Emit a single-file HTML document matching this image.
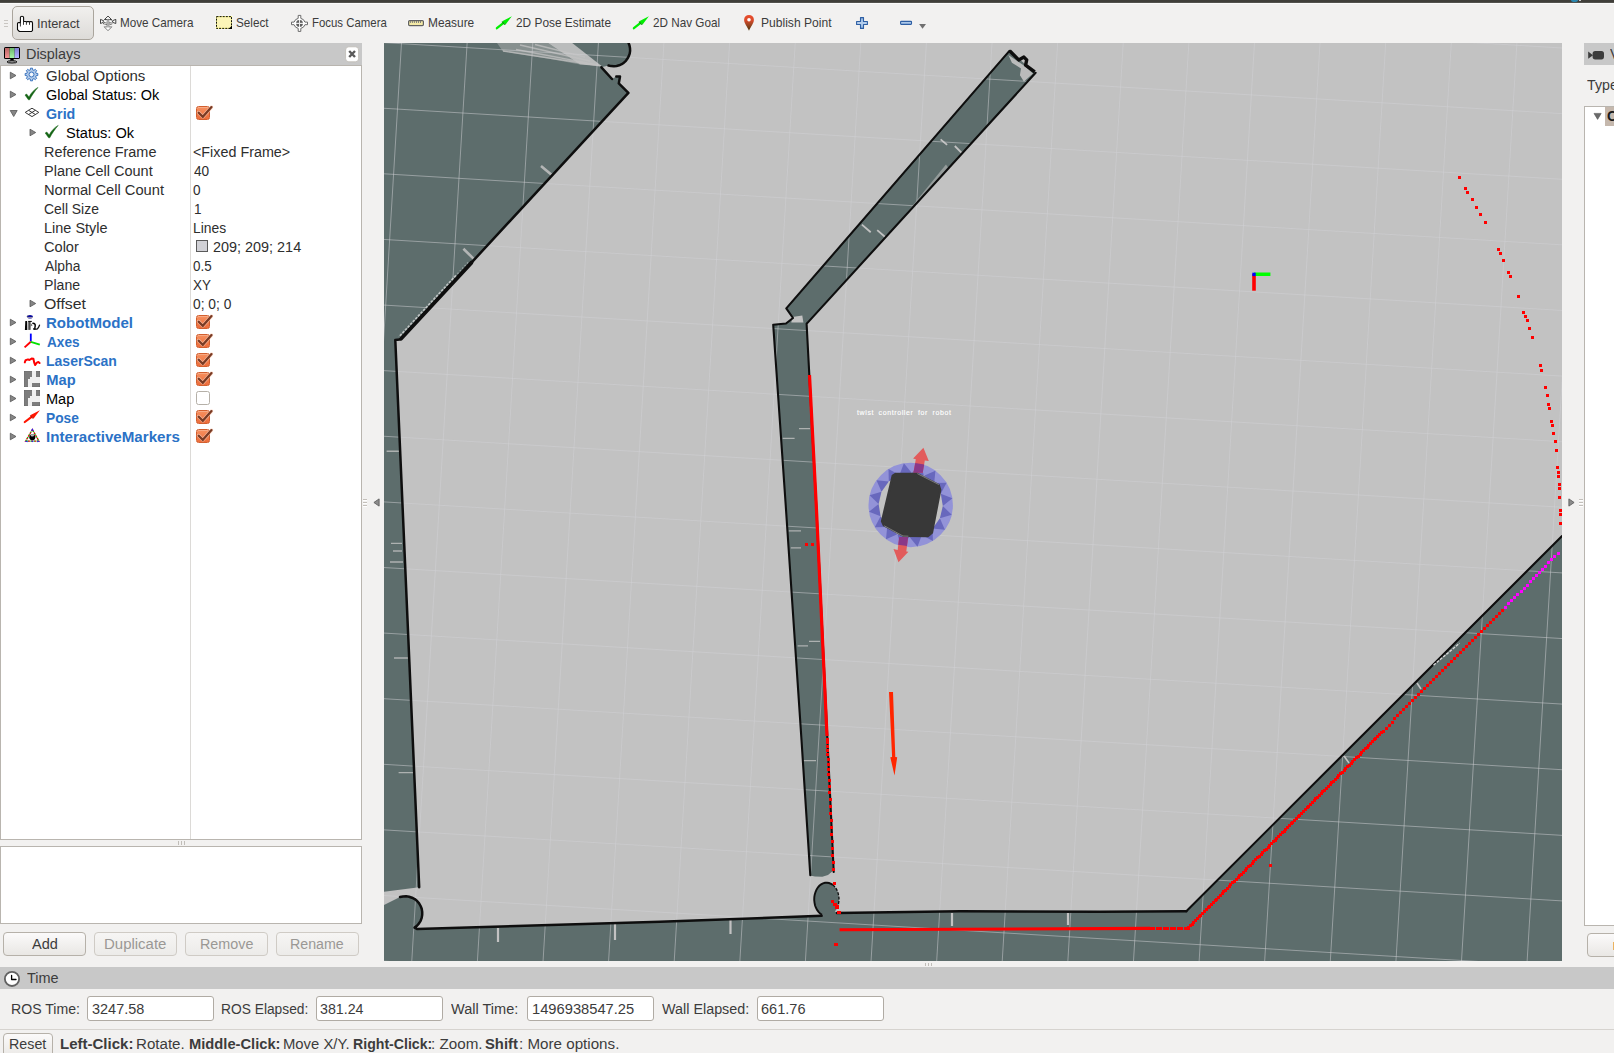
<!DOCTYPE html>
<html><head><meta charset="utf-8"><title>RViz</title>
<style>
html,body{margin:0;padding:0;overflow:hidden;width:1614px;height:1053px}
#root{position:absolute;left:0;top:0;width:1614px;height:1053px;overflow:hidden;background:#f2f1f0}
body{width:1614px;height:1053px;overflow:hidden;position:relative;background:#f2f1f0;font-family:"Liberation Sans",sans-serif}
.a{position:absolute;box-sizing:border-box}
.t{position:absolute;white-space:pre;transform-origin:0 0;display:inline-block}
.hdr{background:#c8c8c8}
.white{background:#fff;border:1px solid #b9b5af}
.btn{border:1px solid #b6b1a9;border-radius:4px;background:linear-gradient(#fbfafa,#e9e7e4)}
.btn.dis{border-color:#cfcbc5;background:linear-gradient(#f6f5f4,#ecebe9)}
.inp{background:#fff;border:1px solid #b0aba4;border-radius:3px}
.cb{position:absolute;left:196px;width:14px;height:14px;box-sizing:border-box;border-radius:2.5px}
.cb.on{background:linear-gradient(#f6905f,#ed6d3b);border:1px solid #d25f2f;box-shadow:inset 0 1px 0 rgba(255,255,255,.25)}
.cb.off{background:#fff;border:1px solid #b5b0a8}
.arr{position:absolute;width:0;height:0}
.arr.r{border-left:6px solid #7d7d7d;border-top:4px solid transparent;border-bottom:4px solid transparent}
.arr.d{border-top:6px solid #4d4d4d;border-left:4px solid transparent;border-right:4px solid transparent}
svg.ic{position:absolute;overflow:visible}

</style></head>
<body><div id="root">
<div class="a" style="left:0;top:0;width:1614px;height:3px;background:linear-gradient(#403f3a 0,#403f3a 70%,#6b6a66 100%)"></div><div class="a" style="left:0;top:3px;width:1614px;height:1px;background:#fbfbfa"></div><div class="a" style="left:1571px;top:-2px;width:7px;height:4px;border-radius:50%;background:#2a86ad"></div><div class="a" style="left:1579px;top:-1px;width:2.4px;height:2.4px;background:#c8c8c8"></div>
<!-- toolbar -->
<div class="a" style="left:4px;top:20px;width:4px;height:1px;background:#c9c6c2;box-shadow:0 3px 0 #c9c6c2,0 6px 0 #c9c6c2"></div>
<div class="a" style="left:12px;top:6px;width:82px;height:34px;border:1px solid #aaa59d;border-radius:5px;background:linear-gradient(#f1f0ee,#dddbd8)"></div>
<!-- displays panel -->
<div class="a hdr" style="left:0;top:43px;width:362px;height:22px"></div>
<div class="a white" style="left:0;top:65px;width:362px;height:775px;border-color:#b9b5af"></div>
<div class="a" style="left:190px;top:66px;width:1px;height:773px;background:#dcdad7"></div>
<div class="a" style="left:178px;top:841px;width:1px;height:4px;background:#c0bdb8;box-shadow:3px 0 0 #c0bdb8,6px 0 0 #c0bdb8"></div>
<div class="a white" style="left:0;top:846px;width:362px;height:78px"></div>
<div class="a btn" style="left:3px;top:931.5px;width:83px;height:24.5px"></div>
<div class="a btn dis" style="left:94px;top:931.5px;width:83px;height:24.5px"></div>
<div class="a btn dis" style="left:185px;top:931.5px;width:83px;height:24.5px"></div>
<div class="a btn dis" style="left:276px;top:931.5px;width:83px;height:24.5px"></div>
<!-- time panel -->
<div class="a hdr" style="left:0;top:967px;width:1614px;height:22px"></div>
<div class="a inp" style="left:87px;top:996px;width:127px;height:25px"></div>
<div class="a inp" style="left:316px;top:996px;width:127px;height:25px"></div>
<div class="a inp" style="left:527px;top:996px;width:127px;height:25px"></div>
<div class="a inp" style="left:757px;top:996px;width:127px;height:25px"></div>
<div class="a" style="left:0;top:1029px;width:1614px;height:1px;background:#d6d3cf"></div>
<div class="a btn" style="left:3px;top:1033px;width:50px;height:26px"></div>
<!-- right panel -->
<div class="a hdr" style="left:1584px;top:43px;width:30px;height:22px"></div>
<div class="a white" style="left:1584px;top:106px;width:40px;height:820px"></div>
<div class="a" style="left:1605px;top:107px;width:20px;height:19px;background:#c5b8ad"></div>
<div class="a btn" style="left:1587px;top:933px;width:40px;height:24px"></div>
<!-- collapse arrows -->
<div class="a" style="left:925px;top:963px;width:1px;height:3px;background:#c0bdb8;box-shadow:3px 0 0 #c0bdb8,6px 0 0 #c0bdb8"></div>
<div class="a" style="left:1612.6px;top:942px;width:2px;height:8px;background:#e9a23b;opacity:.8"></div>
<svg class="ic" style="left:362px;top:490px" width="1260" height="24" viewBox="362 490 1260 24">
<path d="M379.1,498.9 V506.1 L373.9,502.5 Z" fill="#8c8c8c" stroke="#5e5e5e" stroke-width="0.9" stroke-linejoin="round"/>
<path d="M1568.9,498.9 V506.1 L1574.1,502.5 Z" fill="#8c8c8c" stroke="#5e5e5e" stroke-width="0.9" stroke-linejoin="round"/>
<path d="M363,499.5 h4 M363,502.5 h4 M363,505.5 h4 M1579,499.5 h4 M1579,502.5 h4 M1579,505.5 h4" stroke="#c3bfba" stroke-width="1"/>
<path d="M363,500.5 h4 M363,503.5 h4 M363,506.5 h4 M1579,500.5 h4 M1579,503.5 h4 M1579,506.5 h4" stroke="#ffffff" stroke-width="1"/>
</svg>

<svg width="1178" height="918" viewBox="384 43 1178 918" style="position:absolute;left:384px;top:43px;display:block">
<rect x="384" y="43" width="1178" height="918" fill="#5d6d6c"/>
<polygon points="628.6,43.0 629.5,45.5 630.0,48.2 630.1,50.9 629.7,53.6 628.8,56.2 627.5,58.6 625.9,60.8 623.9,62.7 621.7,64.2 619.2,65.3 616.6,66.0 613.9,66.3 611.2,66.1 608.5,65.5 601.4,67.3 612.0,79.0 616.3,76.6 620.0,76.6 618.8,83.4 628.4,92.9 400.5,339.6 395.4,341.0 419.2,887.3 384.0,891.7 384.0,905.0 400.0,897.1 403.0,896.5 406.1,896.3 409.1,896.7 412.0,897.7 414.7,899.1 417.1,901.0 419.1,903.4 420.6,906.0 421.7,908.8 422.2,911.9 422.2,914.9 421.7,917.9 420.6,920.8 419.0,923.4 417.0,925.7 414.6,927.6 417.0,929.0 660.0,921.8 821.7,915.7 823.4,915.3 820.9,914.0 818.6,912.0 816.7,909.3 815.3,906.2 814.5,902.7 814.2,899.1 814.5,895.5 815.5,892.0 816.9,888.9 818.8,886.4 821.1,884.4 823.7,883.2 826.4,882.7 829.1,883.0 831.7,884.2 834.1,886.0 836.0,888.5 837.6,891.6 838.6,895.0 839.0,898.6 838.8,902.2 838.0,905.7 836.7,908.9 834.9,911.6 837.5,912.7 960.0,911.3 1100.0,911.8 1186.3,911.2 1562.0,536.0 1562.0,43.0" fill="#c2c2c2"/>
<polygon points="601.9,66.3 572.2,43 548,43 580,64.4" fill="#c2c2c2" opacity="0.93"/>
<polygon points="580,64.4 548,43 497,43 503,51.5 549,58.8" fill="#c2c2c2" opacity="0.42"/>
<path d="M601,66 L503,51 M596,64.6 L516,49.5 M590,61 L520,45 M585,57 L535,44.5" stroke="#c2c2c2" stroke-width="1.3" fill="none" opacity="0.75"/>
<polygon points="773.2,324.8 786.0,323.5 793.0,318.0 786.3,308.4 1009.4,50.9 1035.6,72.8 807.7,322.6 806.6,323.7 816.5,510.0 827.0,730.0 832.8,871.0 828.0,875.0 822.3,876.8 815.0,876.6 810.0,875.6 801.5,740.0 785.7,505.0" fill="#5d6d6c"/>
<polygon points="792.4,317.1 802.3,315.4 803.4,322.4 791.3,322.6" fill="#c2c2c2"/>
<polygon points="898,223.5 946,164.5 948.2,167.8 902.3,225.7" fill="#c2c2c2" opacity="0.55"/>
<path d="M940.6,139.4 L947.1,144.9 M954.8,146 L962.4,153.6 M861.9,224.6 L870.7,232.3 M877.2,230.1 L886,237.7" stroke="#c2c2c2" stroke-width="1.8" fill="none"/>
<polygon points="1008.4,55 1016.5,60.5 1025,66.2 1033,73.6 1023.9,81.6 1019.9,75.3 1021,68.5 1011.9,62.8" fill="#c2c2c2" opacity="0.92"/>
<path d="M498,928 V942 M615,924 V940 M730.5,920 V934 M952,913 V926 M1068,913 V925" stroke="#c2c2c2" stroke-width="2.2" fill="none"/>
<path d="M391,543.4 H402 M393,551 H402 M390,562 H403 M394,658 H408 M398.6,772.6 H414 M386.6,451.2 H399.7" stroke="#c2c2c2" stroke-width="1.4" fill="none" opacity="0.8"/>
<path d="M799,428.6 H810 M782.6,438.4 H794.6 M788.5,530.8 H801 M790.8,547.9 H801 M809,641.3 H820 M797.6,645.9 H808 M803,760.6 H816" stroke="#c2c2c2" stroke-width="1.3" fill="none" opacity="0.8"/>
<path d="M463.4,248.8 L473.5,258.6 M541,166 L551.5,174.8" stroke="#c2c2c2" stroke-width="2.6" fill="none" opacity="0.85"/>
<!--GRID-->
<g stroke="rgb(209,209,214)" stroke-opacity="0.5" stroke-width="1"><line x1="294.4" y1="-356.4" x2="207.7" y2="1081.7"/><line x1="359.8" y1="-352.5" x2="273.1" y2="1085.7"/><line x1="425.1" y1="-348.6" x2="338.4" y2="1089.6"/><line x1="490.5" y1="-344.6" x2="403.8" y2="1093.6"/><line x1="555.9" y1="-340.7" x2="469.2" y2="1097.5"/><line x1="621.3" y1="-336.7" x2="534.6" y2="1101.4"/><line x1="686.6" y1="-332.8" x2="599.9" y2="1105.4"/><line x1="752.0" y1="-328.8" x2="665.3" y2="1109.3"/><line x1="817.4" y1="-324.9" x2="730.7" y2="1113.3"/><line x1="882.7" y1="-321.0" x2="796.0" y2="1117.2"/><line x1="948.1" y1="-317.0" x2="861.4" y2="1121.1"/><line x1="1013.5" y1="-313.1" x2="926.8" y2="1125.1"/><line x1="1078.9" y1="-309.1" x2="992.1" y2="1129.0"/><line x1="1144.2" y1="-305.2" x2="1057.5" y2="1133.0"/><line x1="1209.6" y1="-301.3" x2="1122.9" y2="1136.9"/><line x1="1275.0" y1="-297.3" x2="1188.3" y2="1140.8"/><line x1="1340.3" y1="-293.4" x2="1253.6" y2="1144.8"/><line x1="1405.7" y1="-289.4" x2="1319.0" y2="1148.7"/><line x1="1471.1" y1="-285.5" x2="1384.4" y2="1152.7"/><line x1="1536.5" y1="-281.6" x2="1449.7" y2="1156.6"/><line x1="1601.8" y1="-277.6" x2="1515.1" y2="1160.6"/><line x1="1667.2" y1="-273.7" x2="1580.5" y2="1164.5"/><line x1="1732.6" y1="-269.7" x2="1645.9" y2="1168.4"/><line x1="278.6" y1="-95.0" x2="1716.8" y2="-8.2"/><line x1="274.7" y1="-29.6" x2="1712.9" y2="57.1"/><line x1="270.8" y1="35.8" x2="1708.9" y2="122.5"/><line x1="266.8" y1="101.2" x2="1705.0" y2="187.9"/><line x1="262.9" y1="166.5" x2="1701.0" y2="253.2"/><line x1="258.9" y1="231.9" x2="1697.1" y2="318.6"/><line x1="255.0" y1="297.3" x2="1693.2" y2="384.0"/><line x1="251.0" y1="362.6" x2="1689.2" y2="449.4"/><line x1="247.1" y1="428.0" x2="1685.3" y2="514.7"/><line x1="243.2" y1="493.4" x2="1681.3" y2="580.1"/><line x1="239.2" y1="558.8" x2="1677.4" y2="645.5"/><line x1="235.3" y1="624.1" x2="1673.4" y2="710.8"/><line x1="231.3" y1="689.5" x2="1669.5" y2="776.2"/><line x1="227.4" y1="754.9" x2="1665.6" y2="841.6"/><line x1="223.5" y1="820.2" x2="1661.6" y2="906.9"/><line x1="219.5" y1="885.6" x2="1657.7" y2="972.3"/><line x1="215.6" y1="951.0" x2="1653.7" y2="1037.7"/><line x1="211.6" y1="1016.4" x2="1649.8" y2="1103.1"/></g>
<polyline points="628.6,43.0 629.5,45.5 630.0,48.2 630.1,50.9 629.7,53.6 628.8,56.2 627.5,58.6 625.9,60.8 623.9,62.7 621.7,64.2 619.2,65.3 616.6,66.0 613.9,66.3 611.2,66.1 608.5,65.5" fill="none" stroke="#0e0e0e" stroke-width="2.5" stroke-linejoin="round" stroke-linecap="round"/>
<polyline points="601.4,67.3 612,79" fill="none" stroke="#0e0e0e" stroke-width="2.5" stroke-linejoin="round" stroke-linecap="round"/>
<polyline points="616.3,76.6 620,76.6 618.8,83.4 628.4,92.9 471.5,262.6" fill="none" stroke="#0e0e0e" stroke-width="2.5" stroke-linejoin="round" stroke-linecap="round"/>
<polyline points="471.5,262.6 401,338.8" fill="none" stroke="#0e0e0e" stroke-width="3.8" stroke-linecap="round"/>
<polyline points="455.9,275.4 398.9,336.9" fill="none" stroke="#d0d2d2" stroke-width="1.7" stroke-dasharray="2.6 1.2" stroke-opacity="0.85"/>
<polyline points="468,262.4 455.9,275.4" fill="none" stroke="#c8cccc" stroke-width="1.2" stroke-dasharray="1.5 2" stroke-opacity="0.6"/>
<polyline points="399.5,339.5 395.3,340 419.2,887.3" fill="none" stroke="#0e0e0e" stroke-width="2.5" stroke-linejoin="round" stroke-linecap="round"/>
<polyline points="400.0,897.1 403.0,896.5 406.1,896.3 409.1,896.7 412.0,897.7 414.7,899.1 417.1,901.0 419.1,903.4 420.6,906.0 421.7,908.8 422.2,911.9 422.2,914.9 421.7,917.9 420.6,920.8 419.0,923.4 417.0,925.7 414.6,927.6 417,929 660,921.8 821.7,915.7" fill="none" stroke="#0e0e0e" stroke-width="2.5" stroke-linejoin="round" stroke-linecap="round"/>
<polyline points="822.0,914.7 820.1,913.5 818.5,911.9 817.1,909.9 815.9,907.7 815.0,905.2 814.5,902.6 814.2,899.9 814.3,897.2 814.7,894.6 815.5,892.0 816.5,889.7 817.8,887.6 819.3,885.8 821.1,884.4 823.0,883.4 825.0,882.8 827.0,882.7 829.0,883.0 831.0,883.8 832.8,884.9" fill="none" stroke="#0e0e0e" stroke-width="1.9"/>
<polyline points="832.8,884.9 834.5,886.5 836.0,888.4 837.2,890.6 838.1,893.1 838.7,895.7 839.0,898.4 838.9,901.2 838.5,903.9 837.8,906.4 836.8,908.8" fill="none" stroke="#0e0e0e" stroke-width="1.3" stroke-dasharray="3 1.5"/>
<polyline points="837,913 960,911.3 1100,911.8 1186.3,911.2" fill="none" stroke="#0e0e0e" stroke-width="2.5" stroke-linejoin="round" stroke-linecap="round"/>
<polyline points="1186.3,911.2 1562,536" fill="none" stroke="#0e0e0e" stroke-width="2.1" stroke-linecap="round"/>
<polyline points="1433.5,665.2 1459.5,643.2" fill="none" stroke="#d8d8d8" stroke-width="1.4" stroke-dasharray="3 1.2"/>
<path d="M1344,756 l5,7 M1417,683 l4,6" fill="none" stroke="#c2c2c2" stroke-width="1.6"/>
<polyline points="810.3,875.3 801.5,740 785.7,505 773.2,324.8 786,323.5 793,318 786.3,308.4 1009.4,50.9" fill="none" stroke="#0e0e0e" stroke-width="2.1" stroke-linejoin="round" stroke-linecap="round"/>
<polyline points="1035.6,72.8 807.7,322.6 806.6,323.7 816.5,510 827,730 833.7,872" fill="none" stroke="#0e0e0e" stroke-width="2.1" stroke-linejoin="round" stroke-linecap="round"/>
<polyline points="1009.6,50.8 1018.7,59.9 1023.9,57.1 1026.7,59.9 1025.6,65.1 1034.7,71.9" fill="none" stroke="#0e0e0e" stroke-width="3.4" stroke-linejoin="round"/>
<g fill="#ff0000" shape-rendering="crispEdges">
<polyline points="809.5,375 816.5,510 827,736" fill="none" stroke="#ff0000" stroke-width="3.2" shape-rendering="auto"/>
<rect x="825.6" y="737.5" width="3" height="3"/><rect x="825.8" y="741.1" width="3" height="3"/><rect x="826.0" y="744.9" width="3" height="3"/><rect x="826.2" y="749.0" width="3" height="3"/><rect x="826.4" y="753.2" width="3" height="3"/><rect x="826.6" y="757.8" width="3" height="3"/><rect x="826.9" y="762.6" width="3" height="3"/><rect x="827.1" y="767.7" width="3" height="3"/><rect x="827.4" y="773.1" width="3" height="3"/><rect x="827.7" y="778.9" width="3" height="3"/><rect x="827.9" y="785.0" width="3" height="3"/><rect x="828.3" y="791.4" width="3" height="3"/><rect x="828.6" y="798.2" width="3" height="3"/><rect x="828.9" y="805.2" width="3" height="3"/><rect x="829.3" y="812.2" width="3" height="3"/><rect x="829.6" y="819.2" width="3" height="3"/><rect x="830.0" y="826.2" width="3" height="3"/><rect x="830.3" y="833.2" width="3" height="3"/><rect x="830.6" y="840.2" width="3" height="3"/><rect x="831.0" y="847.2" width="3" height="3"/><rect x="831.3" y="854.2" width="3" height="3"/><rect x="831.7" y="861.2" width="3" height="3"/><rect x="832.0" y="868.2" width="3" height="3"/>
<rect x="805.2" y="542.5" width="3" height="3"/><rect x="810.9" y="542.5" width="3" height="3"/>
<rect x="832.6" y="882.1" width="3.2" height="3.2"/><rect x="831.1" y="900.2" width="3.2" height="3.2"/><rect x="833.4" y="902.9" width="3.2" height="3.2"/><rect x="835.4" y="905.4" width="3.2" height="3.2"/><rect x="837.3" y="910.6" width="3.2" height="3.2"/><rect x="834.4" y="942.9" width="3.2" height="3.2"/><rect x="1268.8" y="864.1" width="3.2" height="3.2"/>
<polyline points="839.6,929.8 1150,928.4" fill="none" stroke="#ff0000" stroke-width="3.1" shape-rendering="auto"/>
<rect x="1148.5" y="926.9" width="3" height="3"/><rect x="1152.0" y="926.9" width="3" height="3"/><rect x="1155.5" y="926.8" width="3" height="3"/><rect x="1159.0" y="926.8" width="3" height="3"/><rect x="1162.5" y="926.8" width="3" height="3"/><rect x="1166.0" y="926.7" width="3" height="3"/><rect x="1169.5" y="926.7" width="3" height="3"/><rect x="1173.0" y="926.6" width="3" height="3"/><rect x="1176.5" y="926.6" width="3" height="3"/><rect x="1180.0" y="926.6" width="3" height="3"/><rect x="1183.5" y="926.5" width="3" height="3"/><rect x="1187.0" y="926.5" width="3" height="3"/>
<rect x="1187.0" y="926.1" width="3" height="3"/><rect x="1188.8" y="924.3" width="3" height="3"/><rect x="1190.5" y="922.5" width="3" height="3"/><rect x="1192.3" y="920.7" width="3" height="3"/><rect x="1194.1" y="919.0" width="3" height="3"/><rect x="1195.8" y="917.2" width="3" height="3"/><rect x="1197.6" y="915.4" width="3" height="3"/><rect x="1199.4" y="913.6" width="3" height="3"/><rect x="1201.1" y="911.8" width="3" height="3"/><rect x="1202.9" y="910.0" width="3" height="3"/><rect x="1204.7" y="908.2" width="3" height="3"/><rect x="1206.5" y="906.4" width="3" height="3"/><rect x="1208.2" y="904.7" width="3" height="3"/><rect x="1210.0" y="902.9" width="3" height="3"/><rect x="1211.8" y="901.1" width="3" height="3"/><rect x="1213.5" y="899.3" width="3" height="3"/><rect x="1215.3" y="897.5" width="3" height="3"/><rect x="1217.1" y="895.7" width="3" height="3"/><rect x="1218.8" y="893.9" width="3" height="3"/><rect x="1220.6" y="892.1" width="3" height="3"/><rect x="1222.4" y="890.4" width="3" height="3"/><rect x="1224.1" y="888.6" width="3" height="3"/><rect x="1225.9" y="886.8" width="3" height="3"/><rect x="1227.7" y="885.0" width="3" height="3"/><rect x="1229.4" y="883.2" width="3" height="3"/><rect x="1231.2" y="881.4" width="3" height="3"/><rect x="1233.0" y="879.6" width="3" height="3"/><rect x="1234.7" y="877.8" width="3" height="3"/><rect x="1236.5" y="876.1" width="3" height="3"/><rect x="1238.3" y="874.3" width="3" height="3"/><rect x="1240.0" y="872.5" width="3" height="3"/><rect x="1241.8" y="870.7" width="3" height="3"/><rect x="1243.6" y="868.9" width="3" height="3"/><rect x="1245.3" y="867.1" width="3" height="3"/><rect x="1247.1" y="865.3" width="3" height="3"/><rect x="1248.9" y="863.5" width="3" height="3"/><rect x="1250.7" y="861.8" width="3" height="3"/><rect x="1252.4" y="860.0" width="3" height="3"/><rect x="1254.2" y="858.2" width="3" height="3"/><rect x="1256.0" y="856.4" width="3" height="3"/><rect x="1257.7" y="854.6" width="3" height="3"/><rect x="1259.5" y="852.8" width="3" height="3"/><rect x="1261.3" y="851.0" width="3" height="3"/><rect x="1263.0" y="849.2" width="3" height="3"/><rect x="1264.8" y="847.5" width="3" height="3"/><rect x="1266.6" y="845.7" width="3" height="3"/><rect x="1268.3" y="843.9" width="3" height="3"/><rect x="1270.1" y="842.1" width="3" height="3"/><rect x="1271.9" y="840.3" width="3" height="3"/><rect x="1273.6" y="838.5" width="3" height="3"/><rect x="1275.4" y="836.7" width="3" height="3"/><rect x="1277.2" y="834.9" width="3" height="3"/><rect x="1278.9" y="833.2" width="3" height="3"/><rect x="1280.7" y="831.4" width="3" height="3"/><rect x="1282.5" y="829.6" width="3" height="3"/><rect x="1284.2" y="827.8" width="3" height="3"/><rect x="1286.0" y="826.0" width="3" height="3"/><rect x="1287.8" y="824.2" width="3" height="3"/><rect x="1289.6" y="822.4" width="3" height="3"/><rect x="1291.3" y="820.7" width="3" height="3"/><rect x="1293.1" y="818.9" width="3" height="3"/><rect x="1294.9" y="817.1" width="3" height="3"/><rect x="1296.6" y="815.3" width="3" height="3"/><rect x="1298.4" y="813.5" width="3" height="3"/><rect x="1300.2" y="811.7" width="3" height="3"/><rect x="1301.9" y="809.9" width="3" height="3"/><rect x="1303.7" y="808.1" width="3" height="3"/><rect x="1305.5" y="806.4" width="3" height="3"/><rect x="1307.2" y="804.6" width="3" height="3"/><rect x="1309.0" y="802.8" width="3" height="3"/><rect x="1310.8" y="801.0" width="3" height="3"/><rect x="1312.5" y="799.2" width="3" height="3"/><rect x="1314.3" y="797.4" width="3" height="3"/><rect x="1316.1" y="795.6" width="3" height="3"/><rect x="1317.8" y="793.8" width="3" height="3"/><rect x="1319.6" y="792.1" width="3" height="3"/><rect x="1321.4" y="790.3" width="3" height="3"/><rect x="1323.2" y="788.5" width="3" height="3"/><rect x="1324.9" y="786.7" width="3" height="3"/><rect x="1326.7" y="784.9" width="3" height="3"/><rect x="1328.5" y="783.1" width="3" height="3"/><rect x="1330.2" y="781.3" width="3" height="3"/><rect x="1332.0" y="779.5" width="3" height="3"/><rect x="1333.8" y="777.8" width="3" height="3"/><rect x="1335.5" y="776.0" width="3" height="3"/><rect x="1337.3" y="774.2" width="3" height="3"/><rect x="1339.1" y="772.4" width="3" height="3"/><rect x="1340.8" y="770.6" width="3" height="3"/><rect x="1342.6" y="768.8" width="3" height="3"/><rect x="1344.4" y="767.0" width="3" height="3"/><rect x="1346.1" y="765.2" width="3" height="3"/><rect x="1347.9" y="763.5" width="3" height="3"/><rect x="1349.7" y="761.7" width="3" height="3"/><rect x="1351.4" y="759.9" width="3" height="3"/><rect x="1353.2" y="758.1" width="3" height="3"/><rect x="1355.0" y="756.3" width="3" height="3"/><rect x="1356.7" y="754.5" width="3" height="3"/><rect x="1358.5" y="752.7" width="3" height="3"/><rect x="1360.3" y="750.9" width="3" height="3"/><rect x="1362.0" y="749.2" width="3" height="3"/><rect x="1363.8" y="747.4" width="3" height="3"/><rect x="1365.6" y="745.6" width="3" height="3"/><rect x="1367.4" y="743.8" width="3" height="3"/><rect x="1369.1" y="742.0" width="3" height="3"/><rect x="1370.9" y="740.2" width="3" height="3"/><rect x="1372.7" y="738.4" width="3" height="3"/><rect x="1374.4" y="736.6" width="3" height="3"/><rect x="1376.2" y="734.9" width="3" height="3"/><rect x="1378.0" y="733.1" width="3" height="3"/><rect x="1379.7" y="731.3" width="3" height="3"/><rect x="1381.5" y="729.5" width="3" height="3"/>
<rect x="1384.5" y="726.5" width="3" height="3"/><rect x="1387.5" y="723.5" width="3" height="3"/><rect x="1390.5" y="720.5" width="3" height="3"/><rect x="1393.4" y="717.4" width="3" height="3"/><rect x="1396.4" y="714.4" width="3" height="3"/><rect x="1399.4" y="711.4" width="3" height="3"/><rect x="1402.4" y="708.4" width="3" height="3"/><rect x="1405.4" y="705.4" width="3" height="3"/><rect x="1408.4" y="702.4" width="3" height="3"/><rect x="1411.3" y="699.3" width="3" height="3"/><rect x="1414.3" y="696.3" width="3" height="3"/><rect x="1417.3" y="693.3" width="3" height="3"/><rect x="1420.3" y="690.3" width="3" height="3"/><rect x="1423.3" y="687.3" width="3" height="3"/><rect x="1426.2" y="684.2" width="3" height="3"/><rect x="1429.2" y="681.2" width="3" height="3"/><rect x="1432.2" y="678.2" width="3" height="3"/><rect x="1435.2" y="675.2" width="3" height="3"/><rect x="1438.2" y="672.2" width="3" height="3"/><rect x="1441.2" y="669.2" width="3" height="3"/><rect x="1444.1" y="666.1" width="3" height="3"/><rect x="1447.1" y="663.1" width="3" height="3"/><rect x="1450.1" y="660.1" width="3" height="3"/><rect x="1453.1" y="657.1" width="3" height="3"/><rect x="1456.1" y="654.1" width="3" height="3"/><rect x="1459.1" y="651.1" width="3" height="3"/><rect x="1462.0" y="648.0" width="3" height="3"/><rect x="1465.0" y="645.0" width="3" height="3"/><rect x="1468.0" y="642.0" width="3" height="3"/><rect x="1471.0" y="639.0" width="3" height="3"/><rect x="1474.0" y="636.0" width="3" height="3"/><rect x="1476.9" y="632.9" width="3" height="3"/><rect x="1479.9" y="629.9" width="3" height="3"/><rect x="1482.9" y="626.9" width="3" height="3"/><rect x="1485.9" y="623.9" width="3" height="3"/><rect x="1488.9" y="620.9" width="3" height="3"/><rect x="1491.9" y="617.9" width="3" height="3"/><rect x="1494.8" y="614.8" width="3" height="3"/><rect x="1497.8" y="611.8" width="3" height="3"/><rect x="1500.8" y="608.8" width="3" height="3"/>
<rect x="1457.5" y="176.3" width="3" height="3"/><rect x="1464.2" y="187.0" width="3" height="3"/><rect x="1466.4" y="190.7" width="3" height="3"/><rect x="1470.9" y="198.1" width="3" height="3"/><rect x="1474.9" y="205.9" width="3" height="3"/><rect x="1479.0" y="213.3" width="3" height="3"/><rect x="1483.5" y="221.1" width="3" height="3"/><rect x="1496.8" y="247.8" width="3" height="3"/><rect x="1498.6" y="251.5" width="3" height="3"/><rect x="1502.0" y="259.2" width="3" height="3"/><rect x="1506.8" y="271.1" width="3" height="3"/><rect x="1509.0" y="275.2" width="3" height="3"/><rect x="1516.8" y="295.2" width="3" height="3"/><rect x="1522.4" y="311.1" width="3" height="3"/><rect x="1524.2" y="315.2" width="3" height="3"/><rect x="1525.7" y="319.2" width="3" height="3"/><rect x="1528.3" y="327.4" width="3" height="3"/><rect x="1530.5" y="335.5" width="3" height="3"/><rect x="1538.6" y="364.4" width="3" height="3"/><rect x="1539.8" y="368.9" width="3" height="3"/><rect x="1543.8" y="385.5" width="3" height="3"/><rect x="1545.7" y="394.1" width="3" height="3"/><rect x="1547.2" y="402.5" width="3" height="3"/><rect x="1547.9" y="406.6" width="3" height="3"/><rect x="1550.1" y="419.6" width="3" height="3"/><rect x="1550.9" y="423.7" width="3" height="3"/><rect x="1552.4" y="432.2" width="3" height="3"/><rect x="1553.5" y="440.4" width="3" height="3"/><rect x="1554.6" y="448.9" width="3" height="3"/><rect x="1556.1" y="466.3" width="3" height="3"/><rect x="1556.8" y="470.7" width="3" height="3"/><rect x="1557.2" y="474.8" width="3" height="3"/><rect x="1557.9" y="483.3" width="3" height="3"/><rect x="1557.9" y="487.4" width="3" height="3"/><rect x="1558.3" y="495.9" width="3" height="3"/><rect x="1559.0" y="508.5" width="3" height="3"/><rect x="1559.0" y="512.9" width="3" height="3"/><rect x="1559.0" y="521.5" width="3" height="3"/>
</g>
<g fill="#ff00ff" shape-rendering="crispEdges"><rect x="1504.1" y="605.5" width="3" height="3"/><rect x="1507.2" y="602.4" width="3" height="3"/><rect x="1510.3" y="599.2" width="3" height="3"/><rect x="1513.3" y="596.1" width="3" height="3"/><rect x="1516.4" y="592.9" width="3" height="3"/><rect x="1519.5" y="589.8" width="3" height="3"/><rect x="1522.6" y="586.6" width="3" height="3"/><rect x="1525.7" y="583.5" width="3" height="3"/><rect x="1528.8" y="580.3" width="3" height="3"/><rect x="1531.8" y="577.2" width="3" height="3"/><rect x="1534.9" y="574.0" width="3" height="3"/><rect x="1538.0" y="570.9" width="3" height="3"/><rect x="1541.1" y="567.7" width="3" height="3"/><rect x="1544.2" y="564.6" width="3" height="3"/><rect x="1547.3" y="561.4" width="3" height="3"/><rect x="1550.3" y="558.3" width="3" height="3"/><rect x="1553.4" y="555.1" width="3" height="3"/><rect x="1556.5" y="552.0" width="3" height="3"/></g>
<polygon points="889,692 893,692 895.3,757 897.2,757.2 894.5,775.5 890.3,757.2 892.1,757" fill="#ff2600"/>
<rect x="1252.2" y="274" width="3.6" height="16.7" fill="#ff0000"/><rect x="1254" y="272.5" width="16.4" height="3.5" fill="#00ff00"/><rect x="1252.3" y="272.7" width="3.4" height="3.4" fill="#0000ff"/>
<text x="857" y="415" font-family="Liberation Sans, sans-serif" font-size="7" fill="#ffffff" stroke="#ffffff" stroke-width="0.12" textLength="94" lengthAdjust="spacing" word-spacing="2">twist controller for robot</text>
<g>
<circle cx="910.7" cy="505.0" r="37.3" fill="none" stroke="#9393d8" stroke-width="9.800000000000004"/>
<g fill="#6868bd"><polygon points="942.8,506.1 939.9,518.3 951.8,514.7"/><polygon points="939.9,518.3 932.6,528.5 944.9,529.7"/><polygon points="932.6,528.5 921.9,535.1 932.9,540.9"/><polygon points="921.9,535.1 909.6,537.1 917.5,546.7"/><polygon points="909.6,537.1 897.4,534.2 901.0,546.1"/><polygon points="897.4,534.2 887.2,526.9 886.0,539.2"/><polygon points="887.2,526.9 880.6,516.2 874.8,527.2"/><polygon points="880.6,516.2 878.6,503.9 869.0,511.8"/><polygon points="878.6,503.9 881.5,491.7 869.6,495.3"/><polygon points="881.5,491.7 888.8,481.5 876.5,480.3"/><polygon points="888.8,481.5 899.5,474.9 888.5,469.1"/><polygon points="899.5,474.9 911.8,472.9 903.9,463.3"/><polygon points="911.8,472.9 924.0,475.8 920.4,463.9"/><polygon points="924.0,475.8 934.2,483.1 935.4,470.8"/><polygon points="934.2,483.1 940.8,493.8 946.6,482.8"/><polygon points="940.8,493.8 942.8,506.1 952.4,498.2"/></g>
<polygon points="923.4,447.8 928.8,461.1 924.8,460.5 922.7,472.8 913.4,472.8 915.8,459.2 913.1,458.5" fill="#e25b5b"/>
<polygon points="898.5,562.3 893.5,549.0 897.7,550.0 899.2,536.9 908.1,536.9 906.3,551.4 908.4,551.8" fill="#e25b5b"/>
<polygon points="915.3,463.1 924.2,464.6 922.7,472.8 913.4,472.8" fill="#8a3888"/>
<polygon points="899.2,536.9 908.1,536.9 907.0,546.1 898.2,544.7" fill="#8a3888"/>
<polygon points="892.8,475.9 895.9,473.9 917.0,473.9 938.6,485.0 940.1,489.9 931.9,532.6 928.1,535.9 903.4,535.7 883.9,525.2 882.1,521.2" fill="#383838" stroke="#383838" stroke-width="2.5" stroke-linejoin="round"/>
<polyline points="917.3,473.6 938.9,484.6" stroke="#a8a8a8" stroke-width="0.6" fill="none"/>
<polyline points="884.2,525.8 903.0,536.0 908.4,536.2" stroke="#a8a8a8" stroke-width="0.6" fill="none"/>
</g>
</svg>
<div id="rightcover"></div>
<svg class="ic" style="left:0;top:0" width="1000" height="43" viewBox="0 0 1000 43">
<path d="M20.4,22.6 V17.6 Q20.4,16.3 22,16.3 Q23.6,16.3 23.6,17.6 V21.5 H25.6 Q26.4,21.5 26.4,22 Q26.4,21.6 27.4,21.6 H28.6 Q29.5,21.6 29.5,22 Q29.5,21.6 30.4,21.6 H31.4 Q32.5,21.7 32.5,23 V30.4 L31.6,31.5 H19.4 L17.5,29.6 V23.6 Q17.5,22.5 18.6,22.5 Z" fill="#fff" stroke="#0a0a0a" stroke-width="1.1" stroke-linejoin="round"/>
<path d="M20.4,22.4 V26.5 M23.5,21.4 V24.8 M26.4,21.8 V24.8 M29.5,21.8 V24.8" stroke="#222" stroke-width="0.9" fill="none"/>
<g fill="#fff" stroke="#2e2e2e" stroke-width="0.9" stroke-linejoin="round"><path d="M108,16.1 L111.6,19.6 H104.4 Z"/><path d="M100.5,19.4 L103.4,20.7 L103.4,22.3 L100.5,23.5 Z"/><path d="M115.8,19.4 L112.6,20.7 L112.6,22.3 L115.8,23.5 Z"/><ellipse cx="108" cy="21.2" rx="4.6" ry="1.8" stroke-dasharray="1.6 0.9"/><path d="M103,23.4 Q108,26 113,23.4" fill="none" stroke-dasharray="1.6 0.9"/></g>
<path d="M107.1,19.8 h1.8 v7 h3.1 L108,30.8 L104,26.8 h3.1 z" fill="#cfcfcf" stroke="#8a8a8a" stroke-width="0.9" stroke-linejoin="round"/>
<path d="M105.9,27.7 L108,29.7 L110.1,27.7 Z" fill="#fff"/>
<rect x="215.4" y="15.6" width="17" height="13.8" fill="#fff" opacity="0.8"/>
<rect x="216.5" y="16.6" width="15" height="11.8" fill="#fcf5b8" stroke="#fffb86" stroke-width="1.2"/>
<rect x="216.5" y="16.6" width="15" height="11.8" fill="none" stroke="#111" stroke-width="1" stroke-dasharray="2 1.1"/>
<path d="M232,25.5 V29 H228.6 Z" fill="#000"/>
<g stroke="#6b6b6b" stroke-width="1" fill="#fff"><path d="M298.2,15.4 h2.6 v3 a5.3,5.3 0 0 1 4.1,3.7 h2.6 v2.6 h-2.6 a5.3,5.3 0 0 1 -4.1,3.7 v3 h-2.6 v-3 a5.3,5.3 0 0 1 -4.1,-3.7 h-2.6 v-2.6 h2.6 a5.3,5.3 0 0 1 4.1,-3.7 z"/></g>
<circle cx="299.5" cy="23.4" r="3.4" fill="#5e5e5e"/>
<path d="M299.5,18 V29 M294,23.4 H305" stroke="#fff" stroke-width="0.9"/>
<path d="M299.5,20.3 V26.5 M296.4,23.4 H302.6" stroke="#e8e8e8" stroke-width="0.9"/>
<rect x="407.4" y="19.4" width="17.2" height="7.4" rx="2" fill="#fff" opacity="0.8"/>
<rect x="408.6" y="20.6" width="14.8" height="5" rx="1" fill="#f3e9a6" stroke="#616161" stroke-width="1.2"/>
<path d="M410.4,21 v2 M412.4,21 v2 M414.4,21 v2 M416.5,21 v2 M418.5,21 v2 M420.5,21 v2" stroke="#777" stroke-width="0.9"/>
<g transform="translate(0,0)"><path d="M496.9,28.2 L503.6,22.9" stroke="#00f000" stroke-width="2.3" stroke-linecap="round"/><path d="M502.2,21.2 L511.9,16.2 L505.6,24.4 Z" fill="#00ee00"/><path d="M502.2,21.2 L505.6,24.4 L504.6,24.9 L501.6,22 Z" fill="#0a8a0a"/></g>
<g transform="translate(137,0)"><path d="M496.9,28.2 L503.6,22.9" stroke="#00f000" stroke-width="2.3" stroke-linecap="round"/><path d="M502.2,21.2 L511.9,16.2 L505.6,24.4 Z" fill="#00ee00"/><path d="M502.2,21.2 L505.6,24.4 L504.6,24.9 L501.6,22 Z" fill="#0a8a0a"/></g>
<defs><linearGradient id="pin" x1="0" y1="0" x2="0" y2="1"><stop offset="0" stop-color="#ea4e2e"/><stop offset="0.35" stop-color="#d84a2a"/><stop offset="0.7" stop-color="#8a4420"/><stop offset="1" stop-color="#4a3000"/></linearGradient><linearGradient id="pl" x1="0" y1="0" x2="0" y2="1"><stop offset="0" stop-color="#8fb3df"/><stop offset="0.5" stop-color="#b7d0ee"/><stop offset="1" stop-color="#8fb3df"/></linearGradient></defs>
<path d="M749,30.8 C747.5,27 744.1,23.5 744.1,19.8 A4.9,4.9 0 0 1 753.9,19.8 C753.9,23.5 750.5,27 749,30.8 Z" fill="url(#pin)"/>
<circle cx="749" cy="19.7" r="1.8" fill="#fdfdfd"/>
<path d="M860.5,17.6 h3 v3.9 h3.9 v3 h-3.9 v3.9 h-3 v-3.9 h-3.9 v-3 h3.9 z" fill="url(#pl)" stroke="#2e5fa4" stroke-width="1.1" stroke-linejoin="round"/>
<rect x="900.6" y="21.4" width="10.9" height="3" rx="0.6" fill="url(#pl)" stroke="#2e5fa4" stroke-width="1.1"/>
<path d="M919.1,24.1 H926 L922.55,28.8 Z" fill="#707070"/>
</svg>
<svg class="ic" style="left:0;top:43px" width="362" height="22" viewBox="0 43 362 22">
<defs><linearGradient id="sr" x1="0" y1="0" x2="0" y2="1"><stop offset="0" stop-color="#b86464"/><stop offset="1" stop-color="#f59494"/></linearGradient><linearGradient id="sg" x1="0" y1="0" x2="0" y2="1"><stop offset="0" stop-color="#6cb86c"/><stop offset="1" stop-color="#a6f5a6"/></linearGradient><linearGradient id="sb" x1="0" y1="0" x2="0" y2="1"><stop offset="0" stop-color="#8080d0"/><stop offset="1" stop-color="#b4b4ff"/></linearGradient></defs>
<rect x="4" y="47" width="16" height="12" rx="1.6" fill="#000"/>
<rect x="5" y="48" width="4.6" height="10" fill="url(#sr)"/><rect x="9.6" y="48" width="5" height="10" fill="url(#sg)"/><rect x="14.6" y="48" width="4.4" height="10" fill="url(#sb)"/>
<path d="M10.6,59 h2.8 l0.8,1.6 h-4.4 z" fill="#000"/><ellipse cx="12" cy="61.9" rx="4.9" ry="1.1" fill="none" stroke="#000" stroke-width="1"/>
<rect x="345.6" y="46.8" width="13" height="15" rx="3.2" fill="#fff" stroke="#bdb9b3" stroke-width="0.8"/>
<path d="M349.2,51 L355,57 M355,51 L349.2,57" stroke="#5a5a5a" stroke-width="2.4"/>
</svg>
<svg class="ic" style="left:0;top:967px" width="30" height="22" viewBox="0 967 30 22">
<circle cx="12" cy="978.9" r="7.1" fill="#fff" stroke="#616161" stroke-width="1.8"/>
<path d="M11.6,975.4 V979.5 H16" fill="none" stroke="#000" stroke-width="1.3" stroke-linecap="round" stroke-linejoin="round"/>
</svg>
<svg class="ic" style="left:1584px;top:43px" width="30" height="90" viewBox="1584 43 30 90">
<rect x="1592.6" y="51" width="11.4" height="8.4" rx="2.6" fill="#3c3c3c"/><path d="M1588.2,51.6 L1593,55.2 L1588.2,58.8 Z" fill="#3c3c3c"/>
<path d="M1594,113.4 H1601.2 L1597.6,119.4 Z" fill="#6a6a6a" stroke="#555" stroke-width="0.6"/>
</svg>
<svg class="ic" style="left:0;top:65px" width="362" height="400" viewBox="0 65 362 400">
<path d="M10.3,72.2 L16.0,75.5 L10.3,78.8 Z" fill="#868686" stroke="#555" stroke-width="0.8" stroke-linejoin="round"/>
<path d="M10.3,91.2 L16.0,94.5 L10.3,97.8 Z" fill="#868686" stroke="#555" stroke-width="0.8" stroke-linejoin="round"/>
<path d="M10.3,319.2 L16.0,322.5 L10.3,325.8 Z" fill="#868686" stroke="#555" stroke-width="0.8" stroke-linejoin="round"/>
<path d="M10.3,338.2 L16.0,341.5 L10.3,344.8 Z" fill="#868686" stroke="#555" stroke-width="0.8" stroke-linejoin="round"/>
<path d="M10.3,357.2 L16.0,360.5 L10.3,363.8 Z" fill="#868686" stroke="#555" stroke-width="0.8" stroke-linejoin="round"/>
<path d="M10.3,376.2 L16.0,379.5 L10.3,382.8 Z" fill="#868686" stroke="#555" stroke-width="0.8" stroke-linejoin="round"/>
<path d="M10.3,395.2 L16.0,398.5 L10.3,401.8 Z" fill="#868686" stroke="#555" stroke-width="0.8" stroke-linejoin="round"/>
<path d="M10.3,414.2 L16.0,417.5 L10.3,420.8 Z" fill="#868686" stroke="#555" stroke-width="0.8" stroke-linejoin="round"/>
<path d="M10.3,433.2 L16.0,436.5 L10.3,439.8 Z" fill="#868686" stroke="#555" stroke-width="0.8" stroke-linejoin="round"/>
<path d="M10.2,110.5 H17.2 L13.7,116.5 Z" fill="#868686" stroke="#555" stroke-width="0.8" stroke-linejoin="round"/>
<path d="M30,129.2 L35.7,132.5 L30,135.8 Z" fill="#868686" stroke="#555" stroke-width="0.8" stroke-linejoin="round"/>
<path d="M30,300.2 L35.7,303.5 L30,306.8 Z" fill="#868686" stroke="#555" stroke-width="0.8" stroke-linejoin="round"/>
<path d="M37.82,73.48 L37.82,75.52 L36.16,75.64 L35.60,76.99 L36.69,78.25 L35.25,79.69 L33.99,78.60 L32.64,79.16 L32.52,80.82 L30.48,80.82 L30.36,79.16 L29.01,78.60 L27.75,79.69 L26.31,78.25 L27.40,76.99 L26.84,75.64 L25.18,75.52 L25.18,73.48 L26.84,73.36 L27.40,72.01 L26.31,70.75 L27.75,69.31 L29.01,70.40 L30.36,69.84 L30.48,68.18 L32.52,68.18 L32.64,69.84 L33.99,70.40 L35.25,69.31 L36.69,70.75 L35.60,72.01 L36.16,73.36 Z" fill="#b4cbe8" stroke="#3a74c0" stroke-width="1"/>
<circle cx="31.5" cy="74.5" r="2.5" fill="#e6eefa" stroke="#3a74c0" stroke-width="1"/><circle cx="31.5" cy="74.5" r="0.9" fill="#fff"/>
<path d="M25,95.0 L26.6,94.0 L29,97.0 C31,92.80000000000001 34.5,89.2 38,87.4 C34.5,91.4 31.6,95.80000000000001 29.6,99.80000000000001 H28.4 Z" fill="#146414" stroke="#146414" stroke-width="0.5"/>
<path d="M45.2,133.0 L46.800000000000004,132.0 L49.2,135.0 C51.2,130.8 54.7,127.2 58.2,125.4 C54.7,129.4 51.800000000000004,133.8 49.800000000000004,137.8 H48.6 Z" fill="#146414" stroke="#146414" stroke-width="0.5"/>
<g fill="none" stroke="#3a3a3a" stroke-width="1"><path d="M25.2,112.4 L32,108.2 L38.8,112.4 L32,116.6 Z"/><path d="M28.6,110.3 L35.4,114.5 M35.4,110.3 L28.6,114.5"/></g>
<g><ellipse cx="30" cy="316.7" rx="2.9" ry="1.8" fill="#0a0a9c"/><path d="M27.3,317.5 h5.6" stroke="#efe6b4" stroke-width="0.6"/><path d="M27,316.4 l1,-1" stroke="#55503a" stroke-width="0.8"/><path d="M25.3,320.9 h1.7 l0.3,9 h-2.4 z" fill="#050505"/><rect x="27.4" y="321.4" width="0.9" height="8.4" fill="#b8b8b8"/><rect x="28.3" y="321.6" width="2.3" height="8.3" fill="#4a4a4a"/><rect x="28.2" y="320.9" width="3.6" height="1.1" fill="#111"/><path d="M30.6,323 l2,2.2 l-2,1.4 z" fill="#6a6a6a"/><path d="M32.9,323.2 Q35.5,323.4 35.2,326 Q35,328.3 34.2,329" fill="none" stroke="#050505" stroke-width="1.5" stroke-linecap="round"/><path d="M33.4,328 h2.2 v1.8 h-2.2 z" fill="#111"/><path d="M35,329.2 H37 Q38.4,328.4 39.5,325.2" fill="none" stroke="#151515" stroke-width="1.3" stroke-linecap="round"/></g>
<path d="M30.8,341.4 V333.6" stroke="#0000ff" stroke-width="1.8"/><path d="M30.8,341.8 L24.6,347.4" stroke="#ff0000" stroke-width="1.9"/><path d="M30.8,341.8 L39.8,344.6" stroke="#00e000" stroke-width="1.9"/>
<path d="M24.8,362.4 L25.6,360.2 L28,359.4 L29.4,360 L31.6,358.6 L33.4,358.8 L34.2,362.6 L35.2,365 L36.8,362.6 L38.4,362 L39.6,363" fill="none" stroke="#ff0000" stroke-width="2" stroke-linejoin="round" stroke-linecap="round"/>
<rect x="24" y="371" width="16" height="16" fill="#eeeeee"/>
<rect x="24" y="371" width="2" height="2" fill="#6c6c6c"/>
<rect x="26" y="371" width="2" height="2" fill="#6c6c6c"/>
<rect x="28" y="371" width="2" height="2" fill="#6c6c6c"/>
<rect x="30" y="371" width="2" height="2" fill="#6c6c6c"/>
<rect x="36" y="371" width="2" height="2" fill="#6c6c6c"/>
<rect x="38" y="371" width="2" height="2" fill="#6c6c6c"/>
<rect x="24" y="373" width="2" height="2" fill="#6c6c6c"/>
<rect x="26" y="373" width="2" height="2" fill="#6c6c6c"/>
<rect x="28" y="373" width="2" height="2" fill="#6c6c6c"/>
<rect x="30" y="373" width="2" height="2" fill="#6c6c6c"/>
<rect x="36" y="373" width="2" height="2" fill="#6c6c6c"/>
<rect x="38" y="373" width="2" height="2" fill="#6c6c6c"/>
<rect x="24" y="375" width="2" height="2" fill="#6c6c6c"/>
<rect x="26" y="375" width="2" height="2" fill="#6c6c6c"/>
<rect x="28" y="375" width="2" height="2" fill="#6c6c6c"/>
<rect x="30" y="375" width="2" height="2" fill="#6c6c6c"/>
<rect x="36" y="375" width="2" height="2" fill="#6c6c6c"/>
<rect x="38" y="375" width="2" height="2" fill="#6c6c6c"/>
<rect x="24" y="377" width="2" height="2" fill="#6c6c6c"/>
<rect x="26" y="377" width="2" height="2" fill="#6c6c6c"/>
<rect x="28" y="377" width="2" height="2" fill="#6c6c6c"/>
<rect x="24" y="379" width="2" height="2" fill="#6c6c6c"/>
<rect x="26" y="379" width="2" height="2" fill="#6c6c6c"/>
<rect x="24" y="381" width="2" height="2" fill="#6c6c6c"/>
<rect x="26" y="381" width="2" height="2" fill="#6c6c6c"/>
<rect x="24" y="383" width="2" height="2" fill="#6c6c6c"/>
<rect x="26" y="383" width="2" height="2" fill="#6c6c6c"/>
<rect x="32" y="383" width="2" height="2" fill="#6c6c6c"/>
<rect x="34" y="383" width="2" height="2" fill="#6c6c6c"/>
<rect x="36" y="383" width="2" height="2" fill="#6c6c6c"/>
<rect x="38" y="383" width="2" height="2" fill="#6c6c6c"/>
<rect x="24" y="385" width="2" height="2" fill="#6c6c6c"/>
<rect x="26" y="385" width="2" height="2" fill="#6c6c6c"/>
<rect x="32" y="385" width="2" height="2" fill="#6c6c6c"/>
<rect x="34" y="385" width="2" height="2" fill="#6c6c6c"/>
<rect x="36" y="385" width="2" height="2" fill="#6c6c6c"/>
<rect x="38" y="385" width="2" height="2" fill="#6c6c6c"/>
<path d="M26,371 v16 M24,373 h16 M28,371 v16 M24,375 h16 M30,371 v16 M24,377 h16 M32,371 v16 M24,379 h16 M34,371 v16 M24,381 h16 M36,371 v16 M24,383 h16 M38,371 v16 M24,385 h16" stroke="#fff" stroke-opacity="0.25" stroke-width="0.5"/>
<rect x="24" y="390" width="16" height="16" fill="#eeeeee"/>
<rect x="24" y="390" width="2" height="2" fill="#6c6c6c"/>
<rect x="26" y="390" width="2" height="2" fill="#6c6c6c"/>
<rect x="28" y="390" width="2" height="2" fill="#6c6c6c"/>
<rect x="30" y="390" width="2" height="2" fill="#6c6c6c"/>
<rect x="36" y="390" width="2" height="2" fill="#6c6c6c"/>
<rect x="38" y="390" width="2" height="2" fill="#6c6c6c"/>
<rect x="24" y="392" width="2" height="2" fill="#6c6c6c"/>
<rect x="26" y="392" width="2" height="2" fill="#6c6c6c"/>
<rect x="28" y="392" width="2" height="2" fill="#6c6c6c"/>
<rect x="30" y="392" width="2" height="2" fill="#6c6c6c"/>
<rect x="36" y="392" width="2" height="2" fill="#6c6c6c"/>
<rect x="38" y="392" width="2" height="2" fill="#6c6c6c"/>
<rect x="24" y="394" width="2" height="2" fill="#6c6c6c"/>
<rect x="26" y="394" width="2" height="2" fill="#6c6c6c"/>
<rect x="28" y="394" width="2" height="2" fill="#6c6c6c"/>
<rect x="30" y="394" width="2" height="2" fill="#6c6c6c"/>
<rect x="36" y="394" width="2" height="2" fill="#6c6c6c"/>
<rect x="38" y="394" width="2" height="2" fill="#6c6c6c"/>
<rect x="24" y="396" width="2" height="2" fill="#6c6c6c"/>
<rect x="26" y="396" width="2" height="2" fill="#6c6c6c"/>
<rect x="28" y="396" width="2" height="2" fill="#6c6c6c"/>
<rect x="24" y="398" width="2" height="2" fill="#6c6c6c"/>
<rect x="26" y="398" width="2" height="2" fill="#6c6c6c"/>
<rect x="24" y="400" width="2" height="2" fill="#6c6c6c"/>
<rect x="26" y="400" width="2" height="2" fill="#6c6c6c"/>
<rect x="24" y="402" width="2" height="2" fill="#6c6c6c"/>
<rect x="26" y="402" width="2" height="2" fill="#6c6c6c"/>
<rect x="32" y="402" width="2" height="2" fill="#6c6c6c"/>
<rect x="34" y="402" width="2" height="2" fill="#6c6c6c"/>
<rect x="36" y="402" width="2" height="2" fill="#6c6c6c"/>
<rect x="38" y="402" width="2" height="2" fill="#6c6c6c"/>
<rect x="24" y="404" width="2" height="2" fill="#6c6c6c"/>
<rect x="26" y="404" width="2" height="2" fill="#6c6c6c"/>
<rect x="32" y="404" width="2" height="2" fill="#6c6c6c"/>
<rect x="34" y="404" width="2" height="2" fill="#6c6c6c"/>
<rect x="36" y="404" width="2" height="2" fill="#6c6c6c"/>
<rect x="38" y="404" width="2" height="2" fill="#6c6c6c"/>
<path d="M26,390 v16 M24,392 h16 M28,390 v16 M24,394 h16 M30,390 v16 M24,396 h16 M32,390 v16 M24,398 h16 M34,390 v16 M24,400 h16 M36,390 v16 M24,402 h16 M38,390 v16 M24,404 h16" stroke="#fff" stroke-opacity="0.25" stroke-width="0.5"/>
<path d="M24.8,422 L31.6,416.8" stroke="#ff1500" stroke-width="2.2" stroke-linecap="round"/><path d="M30.2,415.2 L39.9,410.2 L33.6,418.4 Z" fill="#ff1500"/><path d="M30.2,415.2 L33.6,418.4 L32.8,418.8 L29.8,415.8 Z" fill="#a01000"/>
<path d="M32.4,429.6 L39,441.2 H25.6 Z" fill="none" stroke="#e00000" stroke-width="1.3" stroke-dasharray="2 1.2"/><path d="M32.4,429.6 L39,441.2 H25.6 Z" fill="none" stroke="#00c000" stroke-width="1.3" stroke-dasharray="1.2 2" stroke-dashoffset="1.6"/><path d="M32.4,428.2 l1.4,2.6 h-2.8 z M24.8,441.6 l2.6,-1.2 l0.2,1.8 z M40,441.6 l-2.6,-1.2 l-0.2,1.8 z M32.4,442.2 l1.4,-1.4 h-2.8 z" fill="#2020ff"/><circle cx="32.3" cy="437.2" r="3" fill="#000"/><ellipse cx="32.3" cy="435.4" rx="1.7" ry="1.1" fill="#b8b8b8"/>
<rect x="196.5" y="240.5" width="11" height="11" fill="#d1d1d6" stroke="#5a5a5a" stroke-width="1"/>
</svg>
<div class="cb on" style="top:106px"></div><svg class="ic" style="left:196px;top:106px" width="18" height="14" viewBox="0 0 18 14"><path d="M2.6,6.6 L6.8,10.8 L15.4,1.2" fill="none" stroke="#fbd0bc" stroke-opacity="0.7" stroke-width="3.6" stroke-linejoin="round" stroke-linecap="round"/><path d="M2.7,6.7 L6.8,10.8 L15.5,1.1" fill="none" stroke="#7a3b24" stroke-width="2.3" stroke-linejoin="miter" stroke-linecap="round"/></svg>
<div class="cb on" style="top:315px"></div><svg class="ic" style="left:196px;top:315px" width="18" height="14" viewBox="0 0 18 14"><path d="M2.6,6.6 L6.8,10.8 L15.4,1.2" fill="none" stroke="#fbd0bc" stroke-opacity="0.7" stroke-width="3.6" stroke-linejoin="round" stroke-linecap="round"/><path d="M2.7,6.7 L6.8,10.8 L15.5,1.1" fill="none" stroke="#7a3b24" stroke-width="2.3" stroke-linejoin="miter" stroke-linecap="round"/></svg>
<div class="cb on" style="top:334px"></div><svg class="ic" style="left:196px;top:334px" width="18" height="14" viewBox="0 0 18 14"><path d="M2.6,6.6 L6.8,10.8 L15.4,1.2" fill="none" stroke="#fbd0bc" stroke-opacity="0.7" stroke-width="3.6" stroke-linejoin="round" stroke-linecap="round"/><path d="M2.7,6.7 L6.8,10.8 L15.5,1.1" fill="none" stroke="#7a3b24" stroke-width="2.3" stroke-linejoin="miter" stroke-linecap="round"/></svg>
<div class="cb on" style="top:353px"></div><svg class="ic" style="left:196px;top:353px" width="18" height="14" viewBox="0 0 18 14"><path d="M2.6,6.6 L6.8,10.8 L15.4,1.2" fill="none" stroke="#fbd0bc" stroke-opacity="0.7" stroke-width="3.6" stroke-linejoin="round" stroke-linecap="round"/><path d="M2.7,6.7 L6.8,10.8 L15.5,1.1" fill="none" stroke="#7a3b24" stroke-width="2.3" stroke-linejoin="miter" stroke-linecap="round"/></svg>
<div class="cb on" style="top:372px"></div><svg class="ic" style="left:196px;top:372px" width="18" height="14" viewBox="0 0 18 14"><path d="M2.6,6.6 L6.8,10.8 L15.4,1.2" fill="none" stroke="#fbd0bc" stroke-opacity="0.7" stroke-width="3.6" stroke-linejoin="round" stroke-linecap="round"/><path d="M2.7,6.7 L6.8,10.8 L15.5,1.1" fill="none" stroke="#7a3b24" stroke-width="2.3" stroke-linejoin="miter" stroke-linecap="round"/></svg>
<div class="cb off" style="top:391px"></div>
<div class="cb on" style="top:410px"></div><svg class="ic" style="left:196px;top:410px" width="18" height="14" viewBox="0 0 18 14"><path d="M2.6,6.6 L6.8,10.8 L15.4,1.2" fill="none" stroke="#fbd0bc" stroke-opacity="0.7" stroke-width="3.6" stroke-linejoin="round" stroke-linecap="round"/><path d="M2.7,6.7 L6.8,10.8 L15.5,1.1" fill="none" stroke="#7a3b24" stroke-width="2.3" stroke-linejoin="miter" stroke-linecap="round"/></svg>
<div class="cb on" style="top:429px"></div><svg class="ic" style="left:196px;top:429px" width="18" height="14" viewBox="0 0 18 14"><path d="M2.6,6.6 L6.8,10.8 L15.4,1.2" fill="none" stroke="#fbd0bc" stroke-opacity="0.7" stroke-width="3.6" stroke-linejoin="round" stroke-linecap="round"/><path d="M2.7,6.7 L6.8,10.8 L15.5,1.1" fill="none" stroke="#7a3b24" stroke-width="2.3" stroke-linejoin="miter" stroke-linecap="round"/></svg>
<span class="t" id="t0" style="left:37.31px;top:16.78px;font-size:13.33px;line-height:13.33px;color:#3c3c3c;transform:scaleX(0.9593)">Interact</span>
<span class="t" id="t1" style="left:120.02px;top:15.78px;font-size:13.33px;line-height:13.33px;color:#3c3c3c;transform:scaleX(0.8777)">Move Camera</span>
<span class="t" id="t2" style="left:236.02px;top:15.78px;font-size:13.33px;line-height:13.33px;color:#3c3c3c;transform:scaleX(0.8790)">Select</span>
<span class="t" id="t3" style="left:312.13px;top:15.78px;font-size:13.33px;line-height:13.33px;color:#3c3c3c;transform:scaleX(0.8555)">Focus Camera</span>
<span class="t" id="t4" style="left:428.32px;top:15.78px;font-size:13.33px;line-height:13.33px;color:#3c3c3c;transform:scaleX(0.8906)">Measure</span>
<span class="t" id="t5" style="left:516.32px;top:15.78px;font-size:13.33px;line-height:13.33px;color:#3c3c3c;transform:scaleX(0.8908)">2D Pose Estimate</span>
<span class="t" id="t6" style="left:653.12px;top:15.78px;font-size:13.33px;line-height:13.33px;color:#3c3c3c;transform:scaleX(0.8790)">2D Nav Goal</span>
<span class="t" id="t7" style="left:761.12px;top:15.78px;font-size:13.33px;line-height:13.33px;color:#3c3c3c;transform:scaleX(0.9066)">Publish Point</span>
<span class="t" id="t8" style="left:26.00px;top:46.68px;font-size:14.67px;line-height:14.67px;color:#3c3c3c;transform:scaleX(0.9837)">Displays</span>
<span class="t" id="t9" style="left:46.20px;top:68.68px;font-size:14.67px;line-height:14.67px;color:#2e2e2e;transform:scaleX(1.0249)">Global Options</span>
<span class="t" id="t10" style="left:46.20px;top:87.68px;font-size:14.67px;line-height:14.67px;color:#000;transform:scaleX(0.9861)">Global Status: Ok</span>
<span class="t" id="t11" style="left:46.21px;top:106.68px;font-size:14.67px;line-height:14.67px;color:#2b72c6;font-weight:700;transform:scaleX(0.9726)">Grid</span>
<span class="t" id="t12" style="left:66.00px;top:125.68px;font-size:14.67px;line-height:14.67px;color:#000;transform:scaleX(0.9956)">Status: Ok</span>
<span class="t" id="t13" style="left:44.30px;top:144.68px;font-size:14.67px;line-height:14.67px;color:#2e2e2e;transform:scaleX(0.9860)">Reference Frame</span>
<span class="t" id="t14" style="left:44.30px;top:163.68px;font-size:14.67px;line-height:14.67px;color:#2e2e2e;transform:scaleX(0.9882)">Plane Cell Count</span>
<span class="t" id="t15" style="left:44.30px;top:182.68px;font-size:14.67px;line-height:14.67px;color:#2e2e2e;transform:scaleX(1.0025)">Normal Cell Count</span>
<span class="t" id="t16" style="left:44.31px;top:201.68px;font-size:14.67px;line-height:14.67px;color:#2e2e2e;transform:scaleX(0.9493)">Cell Size</span>
<span class="t" id="t17" style="left:44.30px;top:220.68px;font-size:14.67px;line-height:14.67px;color:#2e2e2e;transform:scaleX(0.9875)">Line Style</span>
<span class="t" id="t18" style="left:44.30px;top:239.68px;font-size:14.67px;line-height:14.67px;color:#2e2e2e;transform:scaleX(0.9943)">Color</span>
<span class="t" id="t19" style="left:45.26px;top:258.68px;font-size:14.67px;line-height:14.67px;color:#2e2e2e;transform:scaleX(0.9439)">Alpha</span>
<span class="t" id="t20" style="left:44.31px;top:277.68px;font-size:14.67px;line-height:14.67px;color:#2e2e2e;transform:scaleX(0.9624)">Plane</span>
<span class="t" id="t21" style="left:44.28px;top:296.68px;font-size:14.67px;line-height:14.67px;color:#2e2e2e;transform:scaleX(1.0816)">Offset</span>
<span class="t" id="t22" style="left:193.20px;top:144.68px;font-size:14.67px;line-height:14.67px;color:#2e2e2e;transform:scaleX(0.9778)">&lt;Fixed Frame&gt;</span>
<span class="t" id="t23" style="left:194.14px;top:163.68px;font-size:14.67px;line-height:14.67px;color:#2e2e2e;transform:scaleX(0.9302)">40</span>
<span class="t" id="t24" style="left:193.21px;top:182.68px;font-size:14.67px;line-height:14.67px;color:#2e2e2e;transform:scaleX(0.9268)">0</span>
<span class="t" id="t25" style="left:194.22px;top:201.68px;font-size:14.67px;line-height:14.67px;color:#2e2e2e;transform:scaleX(0.9200)">1</span>
<span class="t" id="t26" style="left:193.21px;top:220.68px;font-size:14.67px;line-height:14.67px;color:#2e2e2e;transform:scaleX(0.9460)">Lines</span>
<span class="t" id="t27" style="left:212.90px;top:239.68px;font-size:14.67px;line-height:14.67px;color:#2e2e2e;transform:scaleX(0.9832)">209; 209; 214</span>
<span class="t" id="t28" style="left:193.22px;top:258.68px;font-size:14.67px;line-height:14.67px;color:#2e2e2e;transform:scaleX(0.9158)">0.5</span>
<span class="t" id="t29" style="left:193.22px;top:277.68px;font-size:14.67px;line-height:14.67px;color:#2e2e2e;transform:scaleX(0.9200)">XY</span>
<span class="t" id="t30" style="left:193.21px;top:296.68px;font-size:14.67px;line-height:14.67px;color:#2e2e2e;transform:scaleX(0.9403)">0; 0; 0</span>
<span class="t" id="t31" style="left:46.29px;top:315.68px;font-size:14.67px;line-height:14.67px;color:#2b72c6;font-weight:700;transform:scaleX(1.0273)">RobotModel</span>
<span class="t" id="t32" style="left:47.24px;top:334.68px;font-size:14.67px;line-height:14.67px;color:#2b72c6;font-weight:700;transform:scaleX(0.9309)">Axes</span>
<span class="t" id="t33" style="left:46.31px;top:353.68px;font-size:14.67px;line-height:14.67px;color:#2b72c6;font-weight:700;transform:scaleX(0.9563)">LaserScan</span>
<span class="t" id="t34" style="left:46.30px;top:372.68px;font-size:14.67px;line-height:14.67px;color:#2b72c6;font-weight:700;transform:scaleX(1.0000)">Map</span>
<span class="t" id="t35" style="left:46.30px;top:391.68px;font-size:14.67px;line-height:14.67px;color:#000;transform:scaleX(0.9929)">Map</span>
<span class="t" id="t36" style="left:46.31px;top:410.68px;font-size:14.67px;line-height:14.67px;color:#2b72c6;font-weight:700;transform:scaleX(0.9375)">Pose</span>
<span class="t" id="t37" style="left:46.29px;top:429.68px;font-size:14.67px;line-height:14.67px;color:#2b72c6;font-weight:700;transform:scaleX(1.0333)">InteractiveMarkers</span>
<span class="t" id="t38" style="left:32.29px;top:936.58px;font-size:14.67px;line-height:14.67px;color:#3c3c3c;transform:scaleX(0.9924)">Add</span>
<span class="t" id="t39" style="left:103.80px;top:936.58px;font-size:14.67px;line-height:14.67px;color:#9a9895;transform:scaleX(1.0212)">Duplicate</span>
<span class="t" id="t40" style="left:199.60px;top:936.58px;font-size:14.67px;line-height:14.67px;color:#9a9895;transform:scaleX(0.9779)">Remove</span>
<span class="t" id="t41" style="left:290.31px;top:936.58px;font-size:14.67px;line-height:14.67px;color:#9a9895;transform:scaleX(0.9692)">Rename</span>
<span class="t" id="t42" style="left:27.19px;top:971.28px;font-size:14.67px;line-height:14.67px;color:#3c3c3c;transform:scaleX(0.9876)">Time</span>
<span class="t" id="t43" style="left:11.31px;top:1001.58px;font-size:14.67px;line-height:14.67px;color:#3c3c3c;transform:scaleX(0.9615)">ROS Time:</span>
<span class="t" id="t44" style="left:91.80px;top:1001.58px;font-size:14.67px;line-height:14.67px;color:#3c3c3c;transform:scaleX(0.9866)">3247.58</span>
<span class="t" id="t45" style="left:221.11px;top:1001.58px;font-size:14.67px;line-height:14.67px;color:#3c3c3c;transform:scaleX(0.9403)">ROS Elapsed:</span>
<span class="t" id="t46" style="left:320.21px;top:1001.58px;font-size:14.67px;line-height:14.67px;color:#3c3c3c;transform:scaleX(0.9712)">381.24</span>
<span class="t" id="t47" style="left:451.39px;top:1001.58px;font-size:14.67px;line-height:14.67px;color:#3c3c3c;transform:scaleX(0.9912)">Wall Time:</span>
<span class="t" id="t48" style="left:531.80px;top:1001.58px;font-size:14.67px;line-height:14.67px;color:#3c3c3c;transform:scaleX(1.0030)">1496938547.25</span>
<span class="t" id="t49" style="left:662.08px;top:1001.58px;font-size:14.67px;line-height:14.67px;color:#3c3c3c;transform:scaleX(0.9798)">Wall Elapsed:</span>
<span class="t" id="t50" style="left:761.10px;top:1001.58px;font-size:14.67px;line-height:14.67px;color:#3c3c3c;transform:scaleX(0.9932)">661.76</span>
<span class="t" id="t51" style="left:9.21px;top:1037.18px;font-size:14.67px;line-height:14.67px;color:#3c3c3c;transform:scaleX(0.9738)">Reset</span>
<span class="t" id="t52" style="left:60.00px;top:1037.18px;font-size:14.67px;line-height:14.67px;color:#3c3c3c;font-weight:700;transform:scaleX(1.0242)">Left-Click:</span>
<span class="t" id="t53" style="left:136.09px;top:1037.18px;font-size:14.67px;line-height:14.67px;color:#3c3c3c;transform:scaleX(1.0303)">Rotate.</span>
<span class="t" id="t54" style="left:188.60px;top:1037.18px;font-size:14.67px;line-height:14.67px;color:#3c3c3c;font-weight:700;transform:scaleX(1.0033)">Middle-Click:</span>
<span class="t" id="t55" style="left:282.80px;top:1037.18px;font-size:14.67px;line-height:14.67px;color:#3c3c3c;transform:scaleX(1.0123)">Move X/Y.</span>
<span class="t" id="t56" style="left:352.51px;top:1037.18px;font-size:14.67px;line-height:14.67px;color:#3c3c3c;font-weight:700;transform:scaleX(0.9643)">Right-Click:</span>
<span class="t" id="t57" style="left:430.79px;top:1037.18px;font-size:14.67px;line-height:14.67px;color:#3c3c3c;transform:scaleX(1.0373)">: Zoom.</span>
<span class="t" id="t58" style="left:485.30px;top:1037.18px;font-size:14.67px;line-height:14.67px;color:#3c3c3c;font-weight:700;transform:scaleX(1.0090)">Shift</span>
<span class="t" id="t59" style="left:518.79px;top:1037.18px;font-size:14.67px;line-height:14.67px;color:#3c3c3c;transform:scaleX(1.0353)">: More options.</span>
<span class="t" id="t60" style="left:1610.48px;top:46.68px;font-size:14.67px;line-height:14.67px;color:#3c3c3c;transform:scaleX(0.9700)">Vi</span>
<span class="t" id="t61" style="left:1587.08px;top:78.18px;font-size:14.67px;line-height:14.67px;color:#3c3c3c;transform:scaleX(0.9700)">Type:</span>
<span class="t" id="t62" style="left:1607.31px;top:109.18px;font-size:14.67px;line-height:14.67px;color:#1a1a1a;font-weight:700;transform:scaleX(0.9700)">Current View</span>
</div></body></html>
